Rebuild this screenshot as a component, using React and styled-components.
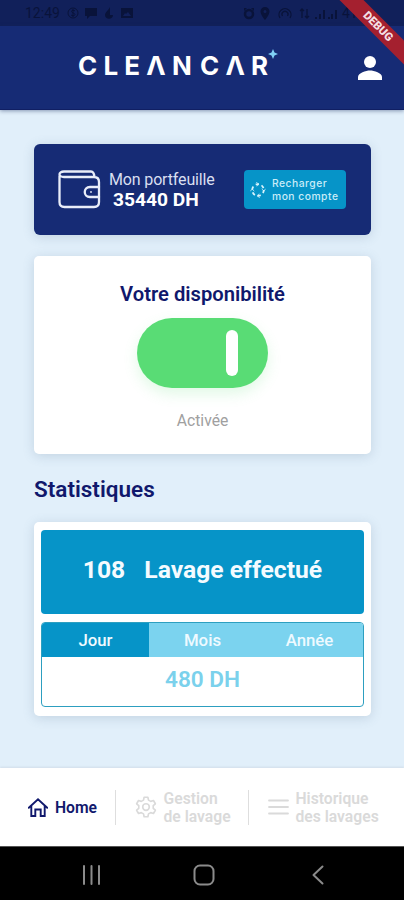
import React, { useState } from 'react';
import styled, { createGlobalStyle } from 'styled-components';

const STATS = { Jour: '480 DH', Mois: '9600 DH', Année: '35440 DH' };

// outline of a six-toothed gear centred on 12,12
const GEAR_POINTS = [0, 60, 120, 180, 240, 300]
  .flatMap((tooth) => [
    [tooth - 20, 8],
    [tooth - 11, 10.8],
    [tooth + 11, 10.8],
    [tooth + 20, 8],
  ])
  .map(([deg, r]) => {
    const a = ((deg - 90) * Math.PI) / 180;
    return `${12 + r * Math.cos(a)},${12 + r * Math.sin(a)}`;
  })
  .join(' ');

function App() {
  const [active, setActive] = useState(true);
  const [period, setPeriod] = useState('Jour');
  return (
    <Screen>
      <GlobalStyle />
      <StatusBar />
      <Header>
        <Logo>
          <span>CLEΛN</span>
          <span>CΛR</span>
          <LogoStar viewBox="0 0 10 10">
            <path d="M5 0 6.500 3.500 10 5 6.500 6.500 5 10 3.500 6.500 0 5 3.500 3.500Z" />
          </LogoStar>
        </Logo>
        <ProfileIcon viewBox="0 0 24 24">
          <circle cx="12" cy="6" r="6" />
          <path d="M0 24v-3c0-4 8-6.5 12-6.5S24 17 24 21v3Z" />
        </ProfileIcon>
      </Header>
      <Main>
        <Wallet>
          <WalletIcon />
          <WalletText>
            <WalletLabel>Mon portfeuille</WalletLabel>
            <WalletAmount>35440 DH</WalletAmount>
          </WalletText>
          <RechargeButton>
            <RechargeIcon />
            <span>
              Recharger
              <br />
              mon compte
            </span>
          </RechargeButton>
        </Wallet>
        <Availability>
          <AvailabilityTitle>Votre disponibilité</AvailabilityTitle>
          <Toggle $on={active} onClick={() => setActive(!active)}>
            <ToggleBar />
          </Toggle>
          <AvailabilityState>
            {active ? 'Activée' : 'Désactivée'}
          </AvailabilityState>
        </Availability>
        <SectionTitle>Statistiques</SectionTitle>
        <Stats>
          <Washes>
            <span>108</span>
            <span>Lavage effectué</span>
          </Washes>
          <Period>
            <Tabs>
              {Object.keys(STATS).map((name) => (
                <Tab
                  key={name}
                  $selected={name === period}
                  onClick={() => setPeriod(name)}
                >
                  {name}
                </Tab>
              ))}
            </Tabs>
            <Earnings>{STATS[period]}</Earnings>
          </Period>
        </Stats>
      </Main>
      <BottomNav />
      <SystemNav />
      <Ribbon>DEBUG</Ribbon>
    </Screen>
  );
}

function StatusBar() {
  return (
    <StatusRow>
      <StatusGroup>
        <Clock>12:49</Clock>
        <svg width="66" height="12" viewBox="0 0 66 12">
          <circle cx="6" cy="6" r="5" fill="none" stroke="currentColor" />
          <path
            d="M8 4C7 3 4.500 3 4.500 4.500S8 6 8 7.500 5 9 4 8M6 2v8"
            fill="none"
            stroke="currentColor"
          />
          <path d="M18 1h12v8h-7l-3 3V9h-2Z" />
          <path d="M43 0c-1 3-5 5-5 8 0 5 8 5 8 0h-3Z" />
          <path
            fillRule="evenodd"
            d="M54 1h12v10H54Zm2 8h8l-3-4-2 2-1-1Z"
          />
        </svg>
      </StatusGroup>
      <StatusGroup>
        <svg width="94" height="13" viewBox="0 0 94 13">
          <circle cx="6" cy="7" r="4" fill="none" stroke="currentColor" strokeWidth="2.500" />
          <path d="M1 1h3L1 4ZM11 1H8l3 3Z" />
          <path
            fillRule="evenodd"
            d="M22 0a4.500 4.500 0 0 0-4.500 4.500C17.500 8 22 13 22 13s4.500-5 4.500-8.500A4.500 4.500 0 0 0 22 0Zm0 3a1.500 1.500 0 1 1 0 3 1.500 1.500 0 0 1 0-3Z"
          />
          <path
            d="M37 11a6 6 0 1 1 10 0M39.500 9a3 3 0 1 1 5 0M59 2v9M57 4l2-2 2 2M64 2v9M62 9l2 2 2-2"
            fill="none"
            stroke="currentColor"
            strokeWidth="1.300"
          />
          <path d="M72 10h2v2h-2zM76 7h2v5h-2zM80 3h2v9h-2zM85 10h2v2h-2zM88 7h2v5h-2zM92 3h2v9h-2z" />
        </svg>
        <Battery>41%</Battery>
      </StatusGroup>
    </StatusRow>
  );
}

function WalletIcon() {
  return (
    <LineIcon $color="#e9edf9" width="43" height="39" viewBox="0 0 43 39" strokeWidth="2.300">
      <path d="M1.500 6v26c0 3 2 5 5 5H36c3 0 5-2 5-5V12c0-3-2-5-5-5H6c-6 0-6-5.500 0-5.500h27c2 0 3 1 3.500 5.500" />
      <path d="M41 17h-9c-7 0-7 10 0 10h9" />
      <circle cx="33" cy="22" r="0.300" strokeWidth="1.500" />
    </LineIcon>
  );
}

function RechargeIcon() {
  return (
    <LineIcon $color="#d9f3fc" width="16" height="16" viewBox="0 0 16 16" strokeWidth="1.800">
      <circle
        cx="8"
        cy="8"
        r="5.800"
        strokeDasharray="3.200 2.870"
        strokeLinecap="butt"
      />
      <path
        d="M6.500 0.500 9 2.200 7 4M15.500 7 13.800 9 12 7M9.500 15.500 7 13.800 9 12M0.500 9 2.200 7 4 9"
        strokeWidth="0.700"
      />
    </LineIcon>
  );
}

function BottomNav() {
  return (
    <Nav>
      <NavItem $width="115px" $active>
        <LineIcon width="20" height="19" viewBox="0 0 20 19" strokeWidth="1.900" strokeLinejoin="miter">
          <path d="M0.800 9.800 10 1.400l9.200 8.400M3.300 8v10h4v-6.500h5.400V18h4V8" />
        </LineIcon>
        <NavLabel>Home</NavLabel>
      </NavItem>
      <NavItem $width="133px">
        <LineIcon width="22" height="22" viewBox="0 0 24 24" strokeWidth="1.800">
          <polygon points={GEAR_POINTS} />
          <circle cx="12" cy="12" r="3.600" />
        </LineIcon>
        <NavLabel>
          Gestion
          <br />
          de lavage
        </NavLabel>
      </NavItem>
      <NavItem $width="156px">
        <LineIcon width="21" height="16" viewBox="0 0 21 16" strokeWidth="1.800">
          <path d="M1 1.500h19M1 8h19M1 14.500h19" />
        </LineIcon>
        <NavLabel>
          Historique
          <br />
          des lavages
        </NavLabel>
      </NavItem>
    </Nav>
  );
}

function SystemNav() {
  return (
    <SystemRow>
      <LineIcon width="20" height="20" viewBox="0 0 20 20" strokeWidth="2">
        <path d="M2 1v18M9.500 1v18M17 1v18" />
      </LineIcon>
      <LineIcon width="22" height="22" viewBox="0 0 22 22" strokeWidth="2">
        <rect x="1.500" y="1.500" width="19" height="19" rx="5.500" />
      </LineIcon>
      <LineIcon width="12" height="20" viewBox="0 0 12 20" strokeWidth="2">
        <path d="M10.500 1.500 1.500 10l9 8.500" />
      </LineIcon>
    </SystemRow>
  );
}

const GlobalStyle = createGlobalStyle`
  * {
    box-sizing: border-box;
  }
  body {
    margin: 0;
    font-family: Roboto, 'Liberation Sans', sans-serif;
  }
  button {
    border: 0;
    padding: 0;
    font-family: inherit;
  }
`;

const Screen = styled.div`
  position: relative;
  display: flex;
  flex-direction: column;
  width: 404px;
  height: 900px;
  overflow: hidden;
  background: #e1effa;
`;

const StatusRow = styled.div`
  display: flex;
  justify-content: space-between;
  height: 26px;
  padding: 0 9px 0 25px;
  background: #11205a;
  color: #09133a;
`;

const StatusGroup = styled.div`
  display: flex;
  align-items: center;
  gap: 5px;
  svg {
    fill: currentColor;
  }
`;

const Clock = styled.span`
  width: 37px;
  font-size: 14px;
`;

const Battery = styled.span`
  width: 53px;
  font-size: 14px;
`;

const Header = styled.header`
  display: flex;
  align-items: center;
  flex-shrink: 0;
  height: 84px;
  padding: 0 22px 0 78px;
  background: #162b75;
  border-bottom: 1px solid #101f63;
  box-shadow: 0 1px 4px rgba(20, 40, 90, 0.45);
  z-index: 1;
`;

const Logo = styled.div`
  position: relative;
  display: flex;
  gap: 2px;
  margin-bottom: 3px;
  color: #fff;
  font-family: Inter, 'Liberation Sans', sans-serif;
  font-size: 26px;
  font-weight: 700;
  line-height: 32px;
  letter-spacing: 6.2px;
`;

const LogoStar = styled.svg`
  position: absolute;
  left: 190px;
  top: -1px;
  width: 10px;
  height: 10px;
  fill: #7fd0f5;
`;

const ProfileIcon = styled.svg`
  width: 24px;
  height: 24px;
  margin-left: auto;
  fill: #fff;
`;

const LineIcon = styled.svg.attrs((p) => ({
  strokeLinejoin: p.strokeLinejoin || 'round',
  strokeLinecap: 'round',
}))`
  flex-shrink: 0;
  fill: none;
  stroke: ${({ $color }) => $color || 'currentColor'};
`;

const Main = styled.main`
  flex: 1;
  display: flex;
  flex-direction: column;
  padding: 34px 33px 0 34px;
`;

const Card = styled.section`
  border-radius: 5px;
  background: #fff;
  box-shadow: 0 2px 12px rgba(70, 100, 130, 0.2);
`;

const Wallet = styled(Card)`
  display: flex;
  align-items: center;
  height: 91px;
  padding: 0 25px 0 24px;
  border-radius: 6px;
  background: #162b75;
`;

const WalletText = styled.div`
  margin-left: 8px;
  white-space: nowrap;
`;

const WalletLabel = styled.div`
  color: #d9dff0;
  font-size: 16px;
  line-height: 20px;
  letter-spacing: -0.15px;
`;

const WalletAmount = styled.div`
  padding-left: 4px;
  color: #fff;
  font-size: 19.2px;
  font-weight: 700;
  line-height: 20px;
`;

const RechargeButton = styled.button`
  display: flex;
  align-items: center;
  gap: 6px;
  width: 102px;
  height: 39px;
  margin-left: auto;
  padding-left: 6px;
  border-radius: 4px;
  background: #0694c8;
  color: #c9ecf8;
  font-family: Inter, 'Liberation Sans', sans-serif;
  font-size: 10.3px;
  font-weight: 500;
  line-height: 12.5px;
  letter-spacing: 0.5px;
  text-align: left;
  white-space: nowrap;
`;

const Availability = styled(Card)`
  display: flex;
  flex-direction: column;
  align-items: center;
  height: 198px;
  margin-top: 21px;
  padding-top: 26px;
`;

const AvailabilityTitle = styled.h2`
  margin: 0;
  color: #10186c;
  font-size: 20.2px;
  font-weight: 600;
  line-height: 25px;
`;

const Toggle = styled.button`
  display: flex;
  align-items: center;
  justify-content: ${({ $on }) => ($on ? 'flex-end' : 'flex-start')};
  width: 131px;
  height: 70px;
  margin-top: 11px;
  padding: 0 30px;
  border-radius: 35px;
  background: ${({ $on }) => ($on ? '#59dc75' : '#c4c4c4')};
  box-shadow: 0 6px 14px rgba(89, 220, 117, 0.18);
`;

const ToggleBar = styled.span`
  width: 12px;
  height: 46px;
  border-radius: 6px;
  background: #fff;
`;

const AvailabilityState = styled.div`
  margin-top: 23px;
  color: #a0a0a0;
  font-size: 15.7px;
  line-height: 20px;
`;

const SectionTitle = styled.h2`
  margin: 22px 0 19px;
  color: #10186c;
  font-size: 22.5px;
  font-weight: 600;
  line-height: 27px;
`;

const Stats = styled(Card)`
  display: flex;
  flex-direction: column;
  gap: 8px;
  height: 194px;
  padding: 8px 7px 9px;
`;

const Washes = styled.div`
  display: flex;
  align-items: center;
  justify-content: center;
  gap: 19px;
  height: 84px;
  padding-bottom: 6px;
  border-radius: 4px;
  background: #0694c8;
  color: #f4fbff;
  font-size: 24.7px;
  font-weight: 700;
`;

const Period = styled.div`
  flex: 1;
  border: 1px solid #2d9fc0;
  border-radius: 4px;
  overflow: hidden;
`;

const Tabs = styled.div`
  display: grid;
  grid-template-columns: repeat(3, 1fr);
  background: #7bd3ef;
`;

const Tab = styled.button`
  height: 34px;
  background: ${({ $selected }) => ($selected ? '#0694c8' : 'transparent')};
  color: #effaff;
  font-size: 16.8px;
  font-weight: 500;
`;

const Earnings = styled.div`
  padding-top: 9px;
  color: #7bd1ec;
  font-size: 22.6px;
  font-weight: 600;
  line-height: 28px;
  text-align: center;
`;

const Nav = styled.nav`
  display: flex;
  align-items: center;
  height: 78px;
  background: #fff;
  box-shadow: 0 -1px 2px rgba(120, 130, 140, 0.15);
`;

const NavItem = styled.div`
  display: flex;
  align-items: center;
  gap: 7px;
  width: ${({ $width }) => $width};
  height: 35px;
  padding-left: ${({ $active }) => ($active ? '28px' : '18.5px')};
  color: ${({ $active }) => ($active ? '#10186c' : '#dadada')};

  & + & {
    border-left: 1px solid #dedede;
  }
`;

const NavLabel = styled.span`
  padding-top: 1px;
  font-size: 15.7px;
  font-weight: 600;
  line-height: 18px;
  white-space: nowrap;
`;

const SystemRow = styled.footer`
  display: flex;
  align-items: center;
  justify-content: space-between;
  height: 54px;
  padding: 2px 80px 0 82px;
  border-top: 1px solid #555;
  background: #000;
  color: #8b8b8b;

  svg:nth-child(2) {
    margin-right: 7px;
  }
`;

// sits over the header, across the top right corner of the screen
const Ribbon = styled.div`
  position: absolute;
  left: 318px;
  top: 18px;
  z-index: 2;
  width: 120px;
  height: 17px;
  transform: rotate(45deg);
  background: #a4202f;
  color: #f5dfe3;
  font-size: 11.5px;
  font-weight: 900;
  line-height: 17px;
  text-align: center;
`;

export default App;
